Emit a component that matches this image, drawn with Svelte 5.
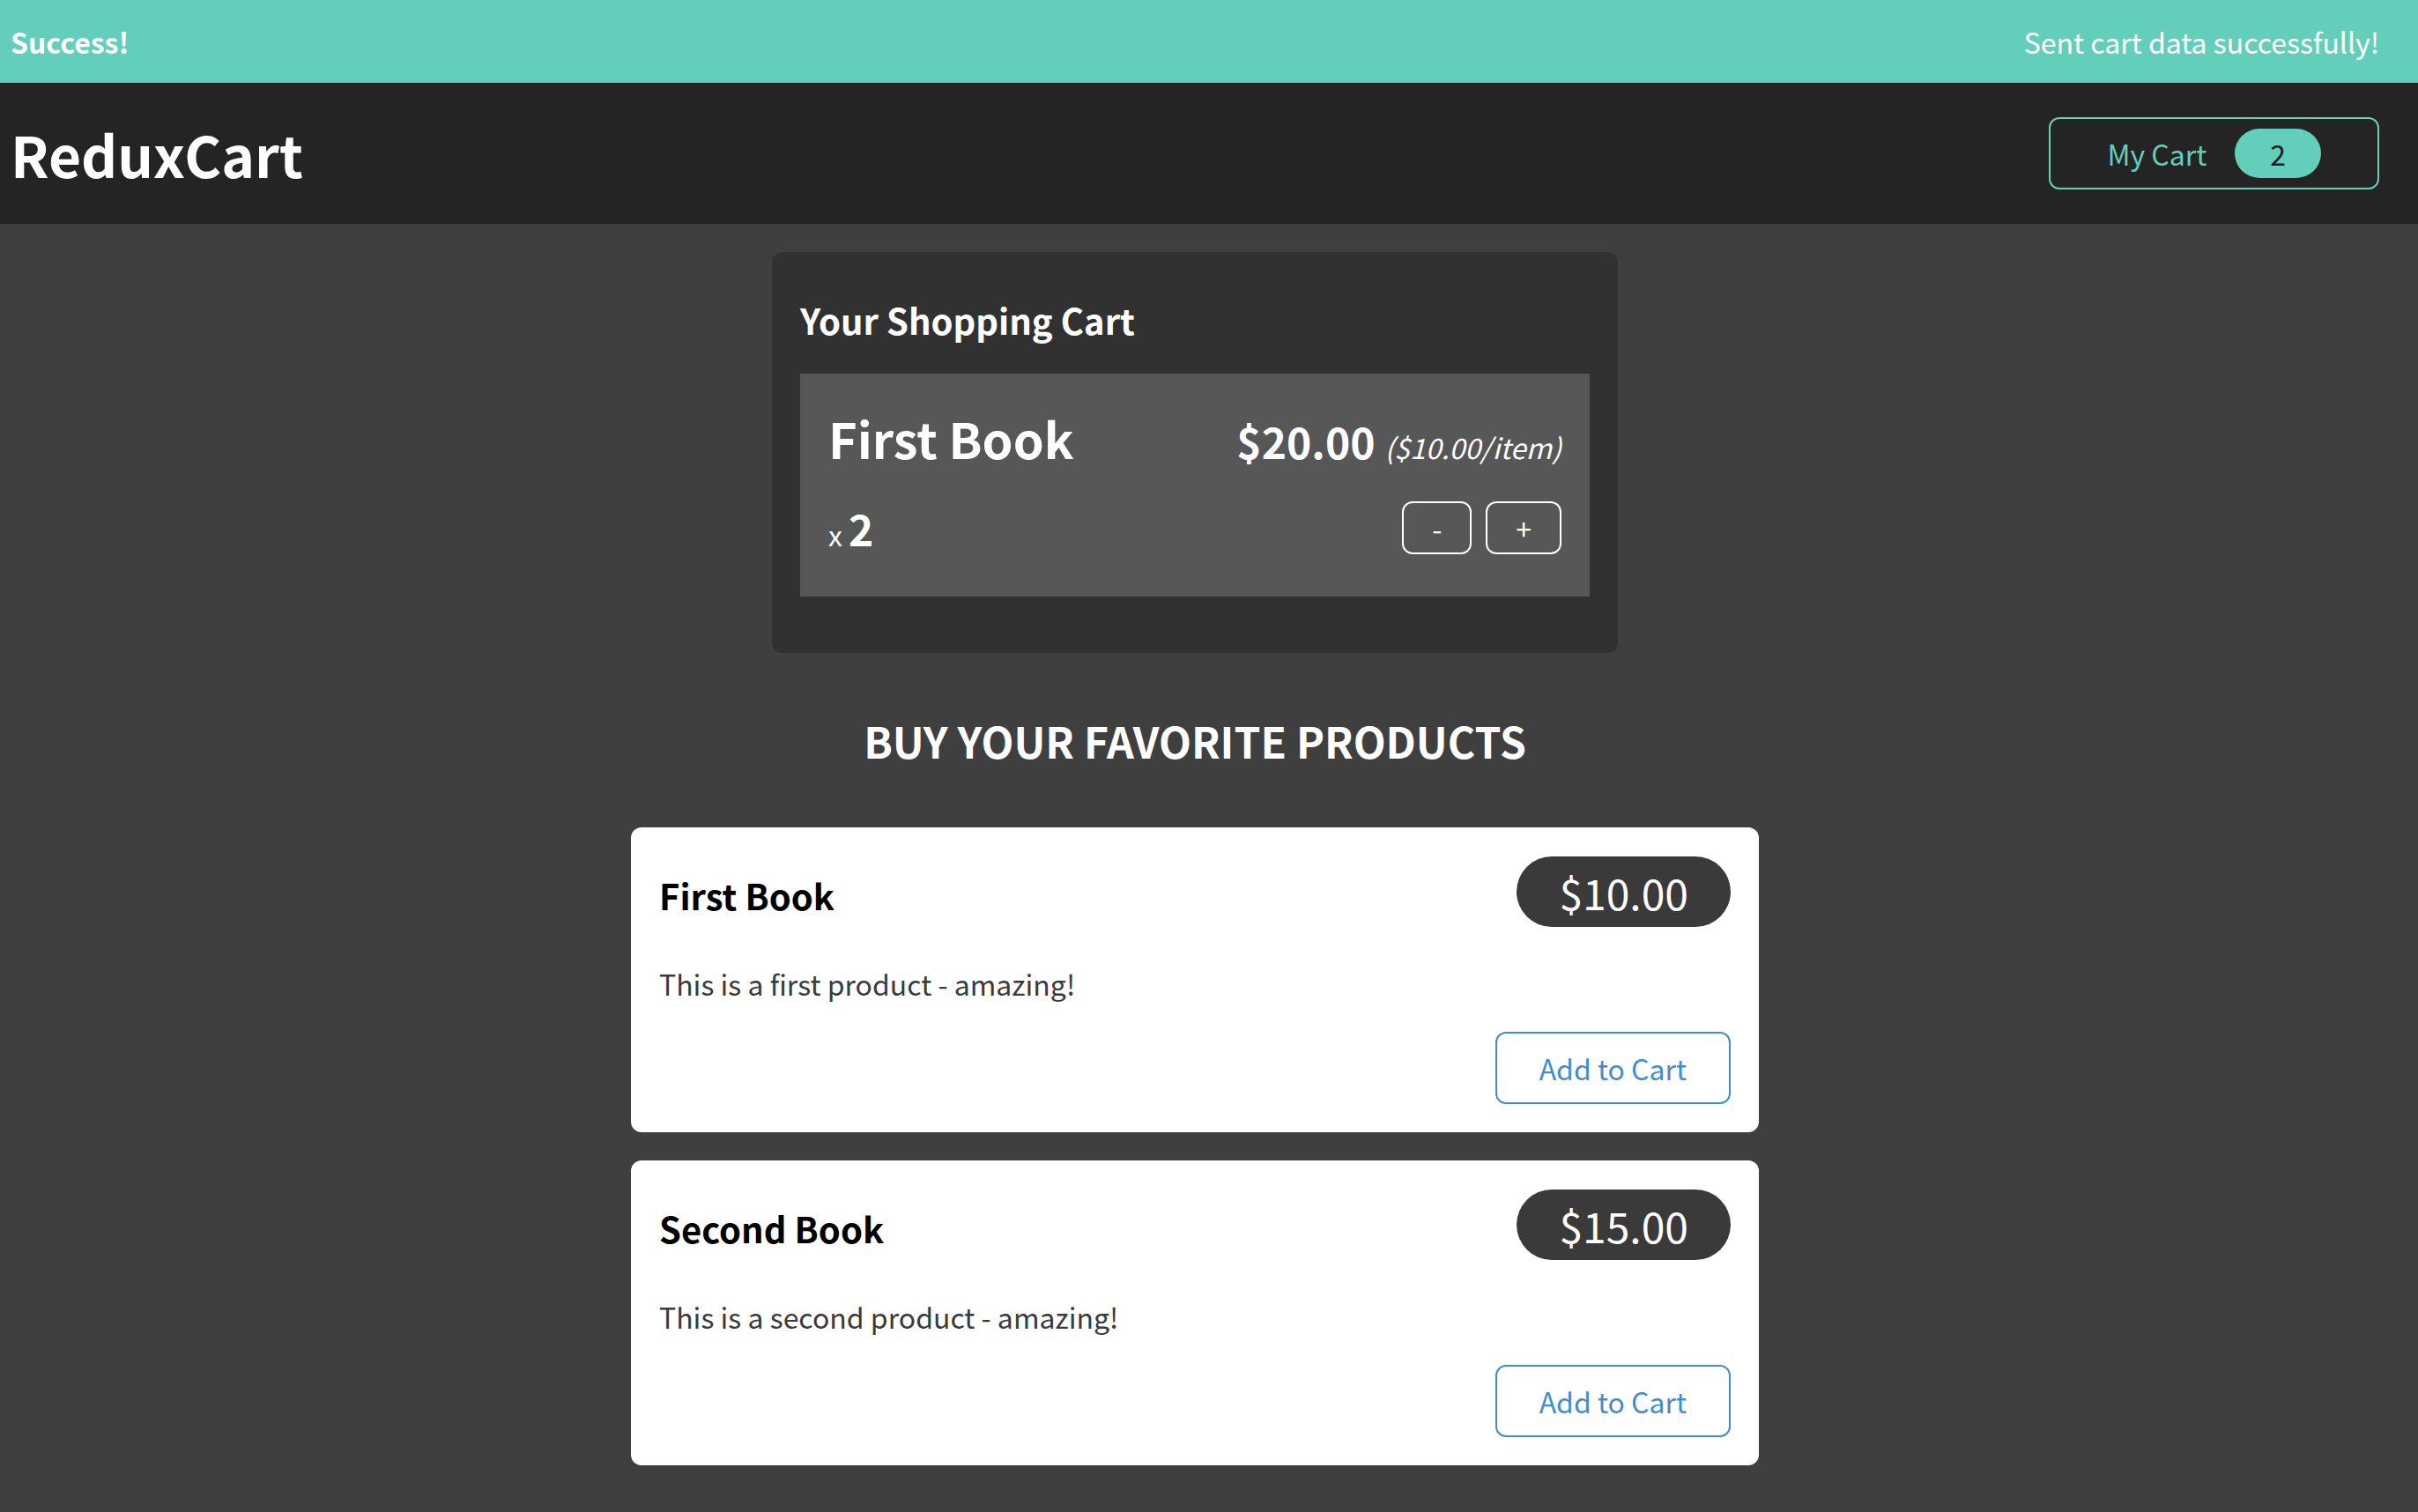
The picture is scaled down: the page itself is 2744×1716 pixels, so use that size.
<script>
  let items = $state([{ id: 'p1', title: 'First Book', price: 10, quantity: 2 }]);
  let showCart = $state(true);
  const products = [
    { id: 'p1', title: 'First Book', price: 10, description: 'This is a first product - amazing!' },
    { id: 'p2', title: 'Second Book', price: 15, description: 'This is a second product - amazing!' }
  ];
  const total = $derived(items.reduce((sum, item) => sum + item.quantity, 0));

  function add(product) {
    const found = items.find((item) => item.id === product.id);
    if (found) found.quantity += 1;
    else items.push({ id: product.id, title: product.title, price: product.price, quantity: 1 });
  }

  function remove(item) {
    if (item.quantity > 1) item.quantity -= 1;
    else items = items.filter((other) => other.id !== item.id);
  }
</script>

<section class="notification" role="status">
  <h2>Success!</h2>
  <p>Sent cart data successfully!</p>
</section>

<header class="bar">
  <h1>ReduxCart</h1>
  <button class="cart-button" onclick={() => (showCart = !showCart)}>
    <span>My Cart</span>
    <span class="badge">{total}</span>
  </button>
</header>

<main>
  {#if showCart}
    <section class="cart">
      <h2>Your Shopping Cart</h2>
      <ul>
        {#each items as item (item.id)}
          <li class="item">
            <div class="summary">
              <h3>{item.title}</h3>
              <div class="price">
                ${(item.price * item.quantity).toFixed(2)}
                <span class="each">(${item.price.toFixed(2)}/item)</span>
              </div>
            </div>
            <div class="details">
              <div class="quantity">x <span>{item.quantity}</span></div>
              <div class="actions">
                <button aria-label="Remove one" onclick={() => remove(item)}>-</button>
                <button aria-label="Add one" onclick={() => add(item)}>+</button>
              </div>
            </div>
          </li>
        {/each}
      </ul>
    </section>
  {/if}

  <section class="products">
    <h2>Buy your favorite products</h2>
    <ul>
      {#each products as product (product.id)}
        <li class="product">
          <div class="head">
            <h3>{product.title}</h3>
            <div class="tag">${product.price.toFixed(2)}</div>
          </div>
          <p>{product.description}</p>
          <div class="buy">
            <button onclick={() => add(product)}>Add to Cart</button>
          </div>
        </li>
      {/each}
    </ul>
  </section>
</main>

<style>
  :global(body) {
    background: #3f3f3f;
    color: #fff;
    font-family: 'Noto Sans CJK JP', 'Noto Sans', sans-serif;
    font-size: 32px;
  }

  h1, h2, h3, p, ul {
    margin: 0;
    padding: 0;
  }

  ul {
    list-style: none;
  }

  button {
    font: inherit;
    background: transparent;
    cursor: pointer;
    border-radius: 12px;
  }

  .notification {
    display: flex;
    justify-content: space-between;
    align-items: center;
    padding: 24px 44px 24px 12px;
    background: #63ceba;
  }

  .notification h2 {
    font-size: 32px;
  }

  .bar {
    display: flex;
    justify-content: space-between;
    align-items: center;
    min-height: 160px;
    padding: 0 44px 0 12px;
    background: #242424;
  }

  h1 {
    font-size: 64px;
  }

  .cart-button {
    display: flex;
    align-items: center;
    gap: 32px;
    padding: 11px 64px;
    border: 2px solid #63ceba;
    color: #63ceba;
  }

  .badge {
    padding: 5px 40px;
    border-radius: 30px;
    background: #63ceba;
    color: #1d1d1d;
  }

  main {
    padding: 32px 32px 32px 0;
  }

  .cart {
    max-width: 896px;
    margin: 0 auto;
    padding: 32px 32px 64px;
    border-radius: 12px;
    background: #313131;
  }

  .cart h2 {
    margin: 16px 0 32px;
    font-size: 40px;
  }

  .item {
    padding: 32px;
    background: #575757;
  }

  .summary,
  .details {
    display: flex;
    justify-content: space-between;
    align-items: baseline;
  }

  .details {
    align-items: center;
    margin: 27px 0 11px;
  }

  .summary h3 {
    font-size: 56px;
  }

  .price {
    font-size: 48px;
    font-weight: bold;
  }

  .each {
    font-size: 32px;
    font-weight: normal;
    font-style: italic;
  }

  .quantity span {
    font-size: 48px;
    font-weight: bold;
  }

  .actions {
    display: flex;
    gap: 16px;
  }

  .actions button {
    padding: 5px 32px;
    border: 2px solid #fff;
    color: #fff;
  }

  .products {
    max-width: 1280px;
    margin: 64px auto 0;
  }

  .products h2 {
    font-size: 48px;
    text-align: center;
    text-transform: uppercase;
  }

  .products ul {
    display: grid;
    gap: 32px;
    margin-top: 64px;
  }

  .product {
    padding: 32px;
    border-radius: 12px;
    background: #fff;
    color: #000;
  }

  .head {
    display: flex;
    justify-content: space-between;
    align-items: baseline;
  }

  .head h3 {
    margin: 16px 0;
    font-size: 40px;
  }

  .tag {
    padding: 5px 48px;
    border-radius: 60px;
    background: #3a3a3a;
    color: #fff;
    font-size: 48px;
  }

  .product p {
    margin: 32px 0;
    color: #3a3a3a;
  }

  .buy {
    display: flex;
    justify-content: flex-end;
  }

  .buy button {
    padding: 16px 48px;
    border: 2px solid #428dcd;
    color: #428dcd;
  }
</style>
